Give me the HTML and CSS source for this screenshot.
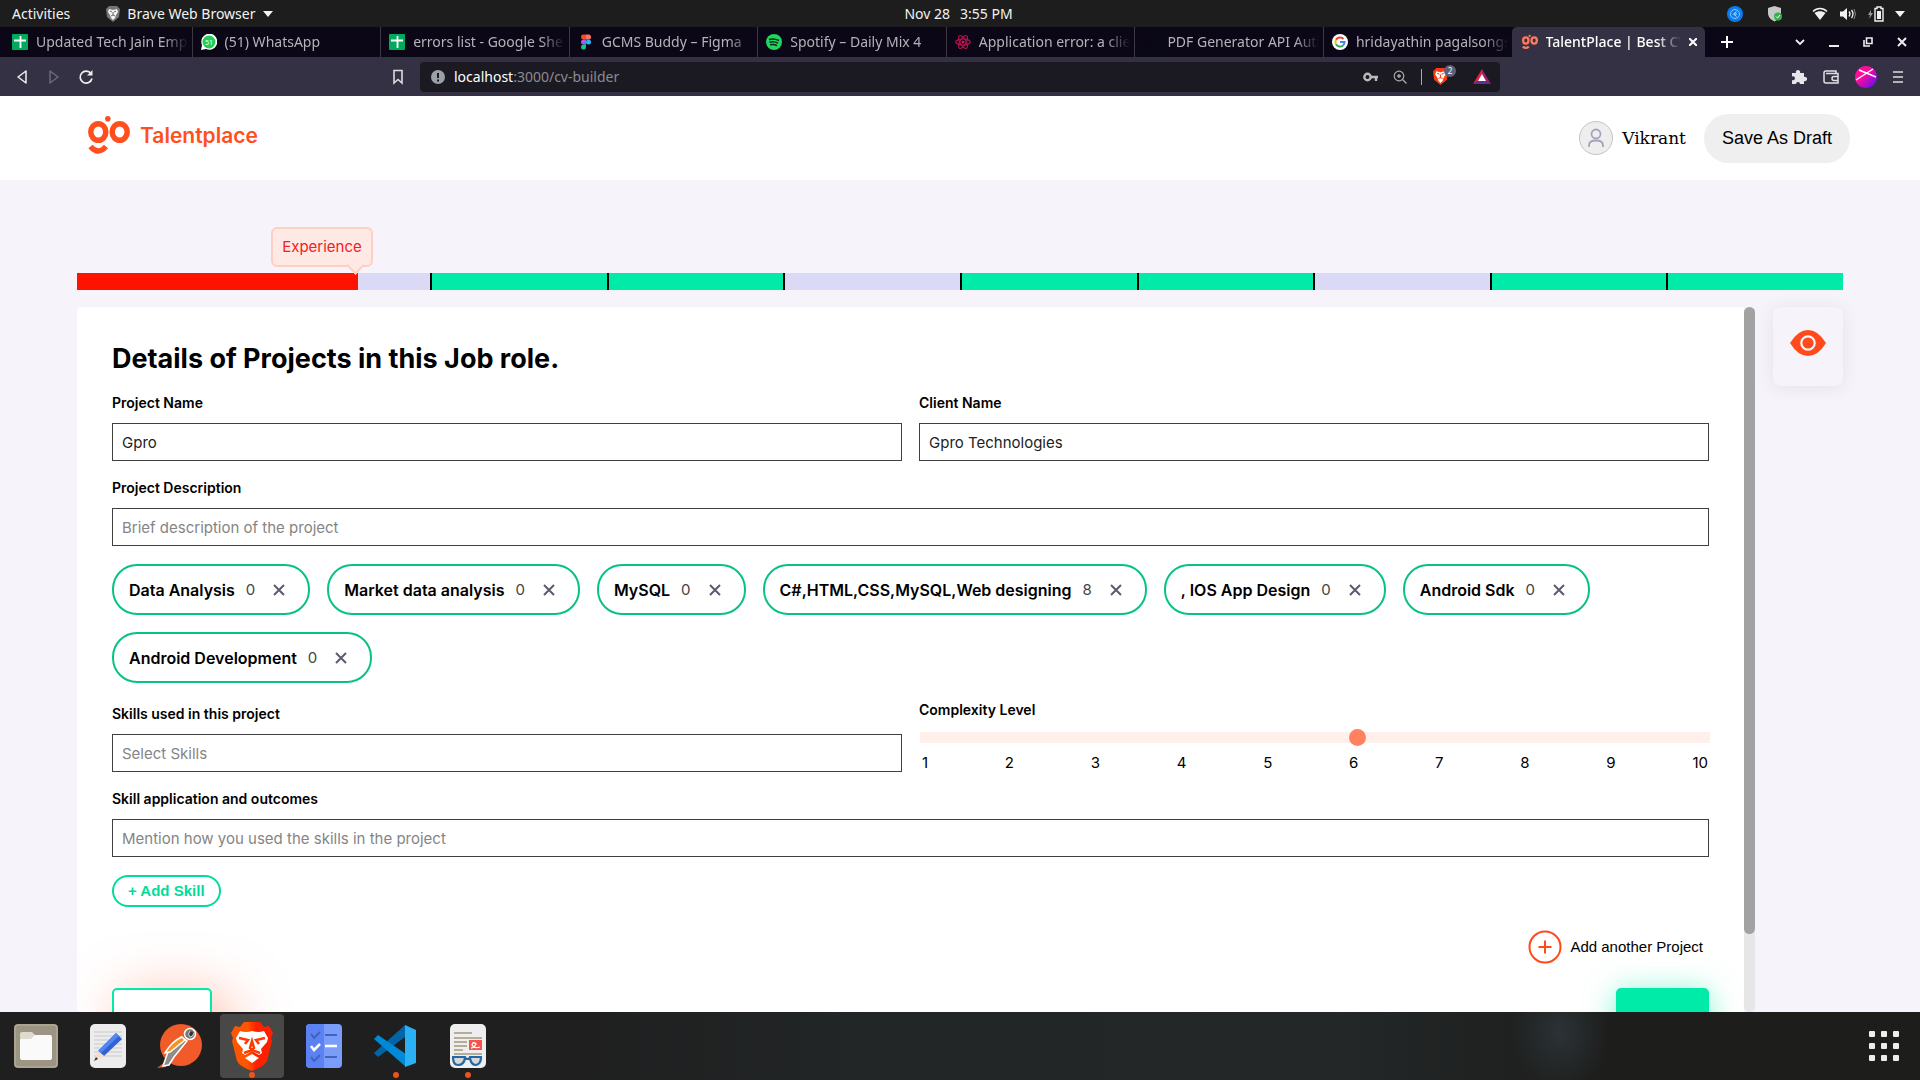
FILE: index.html
```html
<!DOCTYPE html>
<html lang="en">
<head>
<meta charset="utf-8">
<title>TalentPlace | Best</title>
<link rel="stylesheet" href="styles.css">
</head>
<body>
<div class="topbar">
  <div class="topbar-left">
    <span>Activities</span>
    <span class="app-menu">
      <svg width="14" height="16" viewBox="0 0 14 16"><path d="M3 0h8l3 3-1 8-6 5-6-5-1-8z" fill="#77777a"/><path d="M3 3l4 1 4-1 1 3-2 3-1 3-2 2-2-2-1-3-2-3z" fill="#f4f4f4"/><path d="M4 5l2 1M10 5L8 6M7 6v3M5 10l2-1 2 1" stroke="#66666a" fill="none"/></svg>
      Brave Web Browser
      <svg width="10" height="6" viewBox="0 0 10 6"><path d="M0 0h10L5 6z" fill="#f2f2f2"/></svg>
    </span>
  </div>
  <div class="clock"><span>Nov 28</span><span>3:55 PM</span></div>
  <div class="tray">
    <svg class="tray-blue" width="16" height="16" viewBox="0 0 16 16"><circle cx="8" cy="8" r="8" fill="#0a7cf0"/><circle cx="8" cy="8" r="4.500" fill="none" stroke="#8cc6ff"/><path d="M9.500 5.500L6.500 8l3 2.500M10 8H7" fill="none" stroke="#b9dcff"/></svg>
    <svg class="tray-shield" width="14" height="16" viewBox="0 0 14 16"><path d="M6.500 0L13 2v5c0 4-3 7-6.500 8.500C3 14 0 11 0 7V2z" fill="#c8c8c8"/><circle cx="10" cy="10.500" r="4" fill="#35b34a"/><path d="M8 10.500l1.500 1.500 2.500-3" fill="none" stroke="#fff"/></svg>
    <svg class="tray-wifi" width="16" height="14" viewBox="0 0 16 14"><path d="M1 4.500C5 .500 11 .500 15 4.500" fill="none" stroke="#f2f2f2" stroke-width="1.500"/><path d="M2.500 6C5.500 3.500 10.500 3.500 13.500 6L8 13z" fill="#f2f2f2"/></svg>
    <svg class="tray-sound" width="16" height="14" viewBox="0 0 16 14"><path d="M0 4.500h3L7 1v12L3 9.500H0z" fill="#f2f2f2"/><path d="M9 4.500q2 2.500 0 5M11.500 3q3 4 0 8" fill="none" stroke="#f2f2f2" stroke-width="1.300"/><path d="M14 2q3 5 0 10" fill="none" stroke="#888"/></svg>
    <svg class="tray-battery" width="16" height="16" viewBox="0 0 16 16"><path d="M3 4L0 9h2l-1 4 4-6H3z" fill="#999"/><path d="M7 2.500h2V1h4v1.500h2V15H7z" fill="none" stroke="#f2f2f2" stroke-width="1.400"/><path d="M9 5h4v8H9z" fill="#f2f2f2"/></svg>
    <svg width="10" height="6" viewBox="0 0 10 6"><path d="M0 0h10L5 6z" fill="#f2f2f2"/></svg>
  </div>
</div>

<div class="tabstrip">
  <div class="tabs">
    <div class="tab"><svg class="fav" viewBox="0 0 16 16"><rect width="16" height="16" rx="1" fill="#00a95c"/><path d="M8.500 2v12M2 6.500h12" stroke="#fff" stroke-width="1.800"/></svg><span class="tab-title">Updated Tech Jain Employees</span></div>
    <div class="tab"><svg class="fav" viewBox="0 0 16 16"><path d="M0 16l1-5a8 8 0 1 1 4 4z" fill="#fff"/><circle cx="8" cy="8" r="6.500" fill="#1fce54"/><text x="8" y="11" font-family="Noto Sans" font-size="7" text-anchor="middle" fill="#fff">51</text></svg><span class="tab-title">(51) WhatsApp</span></div>
    <div class="tab"><svg class="fav" viewBox="0 0 16 16"><rect width="16" height="16" rx="1" fill="#00a95c"/><path d="M8.500 2v12M2 6.500h12" stroke="#fff" stroke-width="1.800"/></svg><span class="tab-title">errors list - Google Sheets</span></div>
    <div class="tab"><svg class="fav" viewBox="0 0 16 16"><path d="M8 .500H5.500a2.500 2.500 0 0 0 0 5H8z" fill="#f24e1e"/><path d="M8 .500h2.500a2.500 2.500 0 0 1 0 5H8z" fill="#ff7262"/><path d="M8 5.500H5.500a2.500 2.500 0 0 0 0 5H8z" fill="#a259ff"/><circle cx="10.500" cy="8" r="2.500" fill="#1abcfe"/><path d="M8 10.500H5.500A2.500 2.500 0 1 0 8 13z" fill="#0acf83"/></svg><span class="tab-title">GCMS Buddy – Figma</span></div>
    <div class="tab"><svg class="fav" viewBox="0 0 16 16"><circle cx="8" cy="8" r="8" fill="#1ed760"/><path d="M3 5.500q5-1.500 10 1M3.500 8.200q4.500-1.200 8.500 1M4 10.800q4-1 7 .800" fill="none" stroke="#0c2a18" stroke-width="1.500"/></svg><span class="tab-title">Spotify – Daily Mix 4</span></div>
    <div class="tab"><svg class="fav" viewBox="0 0 16 16"><g fill="none" stroke="#b5124c" stroke-width="1.200"><ellipse cx="8" cy="8" rx="7.300" ry="3"/><ellipse cx="8" cy="8" rx="7.300" ry="3" transform="rotate(60 8 8)"/><ellipse cx="8" cy="8" rx="7.300" ry="3" transform="rotate(120 8 8)"/></g><circle cx="8" cy="8" r="1.500" fill="#d3175a"/></svg><span class="tab-title">Application error: a client-side</span></div>
    <div class="tab"><svg class="fav" viewBox="0 0 16 16"><path d="M2.500 1h8L14 4.500V15H2.500zM7 12V7h3v3H7" fill="none" stroke="#050a12" stroke-width="1.500"/></svg><span class="tab-title">PDF Generator API Authentication</span></div>
    <div class="tab"><svg class="fav" viewBox="0 0 16 16"><circle cx="8" cy="8" r="8" fill="#fff"/><g fill="none" stroke-width="2"><path d="M11.500 5A4.600 4.600 0 0 0 4 5.800" stroke="#ea4335"/><path d="M4 5.800a4.600 4.600 0 0 0 0 4.400" stroke="#fbbc05"/><path d="M4 10.200a4.600 4.600 0 0 0 7 1.300" stroke="#34a853"/><path d="M8 8h4.600a4.600 4.600 0 0 1-1.600 3.500" stroke="#4285f4"/></g></svg><span class="tab-title">hridayathin pagalsongs</span></div>
    <div class="tab tab-active"><svg class="fav" viewBox="0 0 42 38"><g fill="none" stroke="#ff7a5c" stroke-width="6"><ellipse cx="10" cy="15" rx="7" ry="8"/><ellipse cx="32" cy="15" rx="7" ry="8"/><path d="M2 31q8 7 16 0"/></g><circle cx="20" cy="3" r="3" fill="#ff7a5c"/></svg><span class="tab-title">TalentPlace | Best CV</span>
      <svg width="8" height="8" viewBox="0 0 8 8"><path d="M0 0l8 8M8 0L0 8" stroke="#fff" stroke-width="2"/></svg></div>
  </div>
  <svg class="new-tab" width="12" height="12" viewBox="0 0 12 12"><path d="M6 0v12M0 6h12" stroke="#fff" stroke-width="2"/></svg>
  <div class="window-controls">
    <svg width="10" height="10" viewBox="0 0 10 10"><path d="M1 3l4 4 4-4" fill="none" stroke="#eee" stroke-width="1.800"/></svg>
    <svg width="10" height="10" viewBox="0 0 10 10"><path d="M0 9h10" stroke="#eee" stroke-width="2"/></svg>
    <svg width="10" height="10" viewBox="0 0 10 10"><path d="M3.500 1h5.500v5.500H3.500zM1 3v6h6" fill="none" stroke="#eee" stroke-width="1.600"/></svg>
    <svg width="10" height="10" viewBox="0 0 10 10"><path d="M1 1l8 8M9 1L1 9" stroke="#eee" stroke-width="2"/></svg>
  </div>
</div>

<div class="toolbar">
  <div class="nav">
    <svg width="16" height="16" viewBox="0 0 16 16"><path d="M12 2v12L4 8z" fill="none" stroke="#eee" stroke-width="1.500" stroke-linejoin="round"/></svg>
    <svg width="16" height="16" viewBox="0 0 16 16"><path d="M4 2v12l8-6z" fill="none" stroke="#6c6978" stroke-width="1.500" stroke-linejoin="round"/></svg>
    <svg width="16" height="16" viewBox="0 0 16 16"><path d="M13 4.500A6 6 0 1 0 14 9.500" fill="none" stroke="#eee" stroke-width="1.700"/><path d="M14.500 1v5.500H9z" fill="#eee"/></svg>
    <svg class="bookmark" width="12" height="16" viewBox="0 0 12 16"><path d="M2 1.500h8v12.500L6 10.500 2 14z" fill="none" stroke="#ddd" stroke-width="1.600"/></svg>
  </div>
  <div class="address">
    <svg width="14" height="14" viewBox="0 0 14 14"><circle cx="7" cy="7" r="7" fill="#9aa0a6"/><path d="M7 3v5M7 9.500v2" stroke="#1b1a23" stroke-width="2"/></svg>
    <span class="url">localhost<span class="url-path">:3000/cv-builder</span></span>
    <svg width="16" height="10" viewBox="0 0 16 10"><circle cx="4.500" cy="5" r="3.200" fill="none" stroke="#bbb" stroke-width="2.400"/><path d="M8 5h7M13 5v4" stroke="#bbb" stroke-width="2.400"/></svg>
    <svg width="14" height="14" viewBox="0 0 14 14"><circle cx="6" cy="6" r="4.800" fill="none" stroke="#aaa" stroke-width="1.200"/><path d="M9.500 9.500l4 4M6 4v4M4 6h4" stroke="#aaa" stroke-width="1.300"/></svg>
    <span class="address-rule"></span>
    <span class="shield">
      <svg width="15" height="17" viewBox="0 0 14 16"><path d="M3 0h8l3 3-1 8-6 5-6-5-1-8z" fill="#fb3a10"/><path d="M3 3l4 1 4-1 1 3-2 3-1 3-2 2-2-2-1-3-2-3z" fill="#fff"/><path d="M4 5l2 1M10 5L8 6M7 6v3M5 10l2-1 2 1" stroke="#fb3a10" fill="none"/></svg>
      <span class="shield-count">2</span>
    </span>
    <svg width="18" height="15" viewBox="0 0 18 15"><path d="M9 0L0 15l9-5z" fill="#e2223f"/><path d="M9 0l9 15-9-5z" fill="#9e1f63"/><path d="M0 15h18L9 9z" fill="#662d91"/><path d="M9 5l4 7H5z" fill="#fff"/></svg>
  </div>
  <div class="extensions">
    <svg width="16" height="16" viewBox="0 0 16 16"><path d="M1 4h4a2.200 2.200 0 1 1 4 0h4v4a2.200 2.200 0 1 1 0 4v3H9a2 2 0 1 0-4 0H1v-4a2 2 0 1 0 0-3.500z" fill="#e6e6ea"/></svg>
    <svg width="16" height="14" viewBox="0 0 16 14"><path d="M13 3.500V1H3a2 2 0 0 0-2 2v8a2 2 0 0 0 2 2h12V3.500H3M15 6.500h-4a2 2 0 0 0 0 4h4" fill="none" stroke="#e0e0e4" stroke-width="1.500"/></svg>
    <svg width="22" height="22" viewBox="0 0 22 22"><defs><linearGradient id="av" x1="0" y1="0" x2="1" y2="1"><stop offset=".4" stop-color="#ff0a9c"/><stop offset="1" stop-color="#4a10ff"/></linearGradient></defs><circle cx="11" cy="11" r="11" fill="url(#av)"/><path d="M1 14L18 3M4 4l17 7" stroke="#fff" stroke-width="1.400"/></svg>
    <svg width="10" height="12" viewBox="0 0 10 12"><path d="M0 1h10M0 6h10M0 11h10" stroke="#ddd" stroke-width="1.600"/></svg>
  </div>
</div>

<header class="header">
  <a class="brand" href="#">
    <svg width="42" height="38" viewBox="0 0 42 38"><g fill="none" stroke="#ff4f1f" stroke-width="5.500"><ellipse cx="10.300" cy="16" rx="7.500" ry="8.300"/><ellipse cx="31.700" cy="16" rx="7.500" ry="8.300"/><path d="M2.500 30.500q7.500 9 15.500 0"/></g><circle cx="19.800" cy="2.800" r="2.800" fill="#ff4f1f"/></svg>
    <span>Talentplace</span>
  </a>
  <div class="account">
    <span class="avatar"><svg width="18" height="20" viewBox="0 0 18 20"><g fill="none" stroke="#a5a3bb" stroke-width="1.800"><circle cx="9" cy="6" r="4.500"/><path d="M2 19v-1.500q0-5 7-5t7 5V19"/></g></svg></span>
    <span class="user-name">Vikrant</span>
    <button class="save-draft" type="button">Save As Draft</button>
  </div>
</header>

<main class="main">
  <div class="progress">
    <span class="seg"></span><span class="seg"></span><span class="seg done"></span><span class="seg done"></span><span class="seg"></span><span class="seg done"></span><span class="seg done"></span><span class="seg"></span><span class="seg done"></span><span class="seg done"></span>
    <div class="progress-fill" style="width: 15.9%"><span class="tip">Experience</span></div>
  </div>

  <div class="workspace">
    <form class="card">
      <h1 class="title">Details of Projects in this Job role.</h1>
      <div class="row">
        <div class="field"><label for="pname">Project Name</label><input class="text-input" id="pname" type="text" value="Gpro"></div>
        <div class="field"><label for="cname">Client Name</label><input class="text-input" id="cname" type="text" value="Gpro Technologies"></div>
      </div>
      <div class="field"><label for="pdesc">Project Description</label><input class="text-input" id="pdesc" type="text" placeholder="Brief description of the project"></div>
      <ul class="chips">
        <li class="chip"><b>Data Analysis</b><span>0</span><button class="remove" type="button" aria-label="Remove"><svg width="12" height="12" viewBox="0 0 12 12"><path d="M1 1l10 10M11 1L1 11"/></svg></button></li>
        <li class="chip"><b>Market data analysis</b><span>0</span><button class="remove" type="button" aria-label="Remove"><svg width="12" height="12" viewBox="0 0 12 12"><path d="M1 1l10 10M11 1L1 11"/></svg></button></li>
        <li class="chip"><b>MySQL</b><span>0</span><button class="remove" type="button" aria-label="Remove"><svg width="12" height="12" viewBox="0 0 12 12"><path d="M1 1l10 10M11 1L1 11"/></svg></button></li>
        <li class="chip"><b>C#,HTML,CSS,MySQL,Web designing</b><span>8</span><button class="remove" type="button" aria-label="Remove"><svg width="12" height="12" viewBox="0 0 12 12"><path d="M1 1l10 10M11 1L1 11"/></svg></button></li>
        <li class="chip"><b>, IOS App Design</b><span>0</span><button class="remove" type="button" aria-label="Remove"><svg width="12" height="12" viewBox="0 0 12 12"><path d="M1 1l10 10M11 1L1 11"/></svg></button></li>
        <li class="chip"><b>Android Sdk</b><span>0</span><button class="remove" type="button" aria-label="Remove"><svg width="12" height="12" viewBox="0 0 12 12"><path d="M1 1l10 10M11 1L1 11"/></svg></button></li>
        <li class="chip"><b>Android Development</b><span>0</span><button class="remove" type="button" aria-label="Remove"><svg width="12" height="12" viewBox="0 0 12 12"><path d="M1 1l10 10M11 1L1 11"/></svg></button></li>
      </ul>
      <div class="row">
        <div class="field"><label for="skills">Skills used in this project</label><input class="text-input" id="skills" type="text" placeholder="Select Skills"></div>
        <div class="field">
          <label for="level">Complexity Level</label>
          <input class="slider" id="level" type="range" min="1" max="10" value="6">
          <div class="ticks"><span>1</span><span>2</span><span>3</span><span>4</span><span>5</span><span>6</span><span>7</span><span>8</span><span>9</span><span>10</span></div>
        </div>
      </div>
      <div class="field"><label for="outcome">Skill application and outcomes</label><input class="text-input" id="outcome" type="text" placeholder="Mention how you used the skills in the project"></div>
      <button class="add-skill" type="button">+ Add Skill</button>
      <button class="add-project" type="button">
        <svg width="34" height="34" viewBox="0 0 34 34"><circle cx="17" cy="17" r="15.500" fill="none" stroke="#ff4a1c" stroke-width="2"/><path d="M17 10.500v13M10.500 17h13" stroke="#ff4a1c" stroke-width="2"/></svg>
        Add another Project
      </button>
      <div class="actions">
        <button class="step prev" type="button" aria-label="Previous"></button>
        <button class="step next" type="button" aria-label="Next"></button>
      </div>
    </form>
    <div class="scrollbar"><div class="thumb"></div></div>
    <button class="preview" type="button" aria-label="Preview">
      <svg width="36" height="26" viewBox="0 0 36 26"><path d="M0 13Q8 0 18 0t18 13Q28 26 18 26T0 13z" fill="#ff4a1c"/><circle cx="18" cy="13" r="6.700" fill="none" stroke="#f6f4fa" stroke-width="2.200"/></svg>
    </button>
  </div>
</main>

<footer class="dock">
  <div class="dock-apps">
    <div class="app"><svg width="44" height="44" viewBox="0 0 44 44"><rect width="44" height="44" rx="4" fill="#9d9583"/><rect x="1" y="1" width="42" height="42" rx="3" fill="none" stroke="#b8b1a0"/><path d="M6 10q0-2 2-2h10l3 3v5H6z" fill="#dedad0"/><path d="M6 16q0-1 2-1h9l4-4h15q2 0 2 2v21q0 2-2 2H8q-2 0-2-2z" fill="#fafafa"/></svg></div>
    <div class="app"><svg width="38" height="46" viewBox="0 0 38 46"><rect x="1" y="1" width="36" height="44" rx="5" fill="#ececec"/><path d="M5 9h28M5 13h28M5 17h28M5 21h28M5 25h28M5 29h28M5 33h28" stroke="#c9c9c9"/><path d="M27 10l6 6-18 17-6-5z" fill="#2f62d9"/><path d="M27 10l3 3-18 17-3-2z" fill="#5485ee"/><path d="M9 28l6 5-10 5z" fill="#fbdcc4"/><path d="M7 34l2 2-4 2z" fill="#333"/></svg></div>
    <div class="app"><svg width="46" height="46" viewBox="0 0 46 46"><circle cx="24" cy="22" r="21" fill="#f15a29"/><path d="M0 45l8-6 1 5z" fill="#f15a29"/><g stroke="#fff" stroke-width="1.500"><path d="M24 14l6 4-13 16-5 8-6 1 5-14z" fill="#8d8d8d"/><path d="M25 14l3 3-15 12-5 1q7-12 17-16z" fill="#f7941e"/><circle cx="33" cy="11" r="5.500" fill="#777"/></g><path d="M33 8q-3 3 0 6 3 0 4-4" fill="#333" stroke="#ddd"/></svg></div>
    <div class="app current running"><svg width="42" height="50" viewBox="0 0 42 50"><defs><linearGradient id="br"><stop offset=".4" stop-color="#ff5500"/><stop offset=".6" stop-color="#ff2000"/></linearGradient></defs><path d="M13 1h16l4 5 5-1 4 7-2 5 1 3-5 20q-2 5-15 10Q8 45 6 40L1 20l1-3-2-5 4-7 5 1z" fill="url(#br)"/><path d="M9 10q6 2 12 0 6 2 12 0l4 7-1 4-6 7 1 4-3 2-7-4-7 4-3-2 1-4-6-7-1-4z" fill="#fff"/><path d="M21 33l7 4-7 5-7-5z" fill="#fff"/><path d="M8 17l9 2-3 4M34 17l-9 2 3 4M21 20l-2 7 2 2 2-2zM13 32l8-3 8 3" fill="none" stroke="#ff3a00" stroke-width="2.500"/></svg></div>
    <div class="app"><svg width="38" height="46" viewBox="0 0 38 46"><rect x="1" y="1" width="36" height="44" rx="4" fill="#7a9dfa"/><path d="M5 1h14v44H5q-4 0-4-4V5q0-4 4-4z" fill="#5b82f3"/><path d="M6 11l3 4 6-6M6 34l3 4 6-6M20 12h12M20 34h12" fill="none" stroke="#4162bd" stroke-width="2"/><path d="M6 23l3 4 6-6M20 23h12" fill="none" stroke="#fff" stroke-width="2.500"/></svg></div>
    <div class="app running"><svg width="44" height="44" viewBox="0 0 44 44"><path d="M31 1v42L4 17l-3-3 3-3 4 1z" fill="none"/><path d="M0 29l4 4 27-20V1z" fill="#0065a9"/><path d="M4 11l-4 4 32 28V30z" fill="#0089d6"/><path d="M31 1l11 5v33l-11 4z" fill="#2cb0f4"/><path d="M31 1v12L19 22l12 9v12" fill="none"/></svg></div>
    <div class="app running"><svg width="38" height="46" viewBox="0 0 38 46"><rect x="1" y="1" width="36" height="44" rx="5" fill="#eee"/><path d="M5 10h18M5 15h28M5 19h13M5 23h13M5 27h9M5 31h28" stroke="#b5ad98" stroke-width="2"/><rect x="20" y="17" width="13" height="10" fill="#f4544c"/><path d="M22 25q3 0 5-4-3-3-4 1 2 4 8 2" fill="none" stroke="#fff" stroke-width="1.300"/><path d="M3 34h13l1 2h3l1-2h12M4 34q0 8 5 8 6 0 7-7M21 35q1 7 6 7 5-1 5-8" fill="#9c9c9c44" stroke="#2468a8" stroke-width="2.200"/></svg></div>
  </div>
  <svg width="30" height="30" viewBox="0 0 30 30"><g fill="#eeeeec"><rect width="6" height="6" rx="1"/><rect x="12" width="6" height="6" rx="1"/><rect x="24" width="6" height="6" rx="1"/><rect y="12" width="6" height="6" rx="1"/><rect x="12" y="12" width="6" height="6" rx="1"/><rect x="24" y="12" width="6" height="6" rx="1"/><rect y="24" width="6" height="6" rx="1"/><rect x="12" y="24" width="6" height="6" rx="1"/><rect x="24" y="24" width="6" height="6" rx="1"/></g></svg>
</footer>
</body>
</html>
```
FILE: styles.css
```css
* { box-sizing: border-box; }

body {
  margin: 0;
  height: 100vh;
  display: flex;
  flex-direction: column;
  overflow: hidden;
  background: #f6f4fa;
  font-family: Inter, sans-serif;
  color: #000;
}

svg { display: block; flex: none; }

button { font-family: inherit; cursor: pointer; }

/* Desktop top bar */
.topbar {
  display: grid;
  grid-template-columns: 1fr auto 1fr;
  align-items: center;
  height: 27px;
  flex: none;
  padding: 0 15px 0 12px;
  background: #1d1d1d;
  color: #f2f2f2;
  font: 14px/20px "Noto Sans", sans-serif;
}
.topbar-left { display: flex; gap: 36px; }
.app-menu { display: flex; align-items: center; gap: 7px; }
.clock { display: flex; gap: 10px; }
.tray { display: flex; align-items: center; justify-content: flex-end; }
.tray-blue { margin-right: 25px; }
.tray-shield { margin-right: 30px; }
.tray-wifi { margin-right: 12px; }
.tray-sound { margin-right: 12px; }
.tray-battery { margin-right: 11px; }

/* Browser tabs */
.tabstrip {
  display: flex;
  align-items: center;
  height: 30px;
  flex: none;
  padding: 0 13px 0 4px;
  background: #0c0716;
  color: #b4b2ba;
  font: 14px/20px "Noto Sans", sans-serif;
}
.tabs { display: flex; flex: 0 1 1701px; min-width: 0; height: 100%; }
.tab {
  display: flex;
  align-items: center;
  flex: 1 1 0;
  min-width: 0;
  gap: 8px;
  padding: 0 4px 0 8px;
  border-right: 1px solid #3b3843;
}
.fav { width: 16px; height: 16px; }
.tab-title {
  flex: 1;
  min-width: 0;
  overflow: hidden;
  white-space: nowrap;
  mask-image: linear-gradient(to right, #000 calc(100% - 24px), transparent);
}
.tab:nth-child(8) { border-right: 0; }
.tab-active {
  padding: 0 8px 0 10px;
  border: 0;
  border-radius: 5px 5px 0 0;
  background: #343144;
  color: #fff;
  font-weight: 500;
}
.new-tab { margin-left: 16px; }
.window-controls { display: flex; gap: 24px; margin-left: auto; }

/* Browser toolbar */
.toolbar {
  display: grid;
  grid-template-columns: 1fr minmax(0, 1080px) 1fr;
  align-items: center;
  height: 39px;
  flex: none;
  background: #343144;
  font: 14px/20px "Noto Sans", sans-serif;
}
.nav { display: flex; align-items: center; gap: 16px; padding: 0 16px 0 14px; }
.bookmark { margin-left: auto; }
.address {
  display: flex;
  align-items: center;
  gap: 14px;
  height: 30px;
  padding: 0 9px 0 11px;
  border-radius: 4px;
  background: #1b1a23;
}
.url { flex: 1; margin-left: -5px; color: #fff; }
.url-path { color: #8b8a92; }
.address-rule { width: 1px; height: 16px; background: #aaa; }
.shield { position: relative; margin: 0 11px 0 -3px; }
.shield-count {
  position: absolute;
  left: 11px;
  top: -3px;
  width: 12px;
  height: 12px;
  border-radius: 6px;
  background: #5e6074;
  color: #fff;
  font-size: 8px;
  line-height: 12px;
  text-align: center;
}
.extensions { display: flex; align-items: center; justify-content: flex-end; gap: 16px; padding-right: 17px; }

/* Site header */
.header {
  display: flex;
  align-items: center;
  justify-content: space-between;
  height: 84px;
  flex: none;
  padding: 0 70px 0 88px;
  background: #fff;
}
.brand {
  display: flex;
  align-items: center;
  gap: 10px;
  padding-bottom: 6px;
  color: #ff4f1f;
  font-size: 21px;
  font-weight: 600;
  text-decoration: none;
}
.account { display: flex; align-items: center; }
.avatar {
  display: grid;
  place-items: center;
  width: 34px;
  height: 34px;
  border: 1px solid #c4c4c4;
  border-radius: 50%;
  background: #eee;
}
.user-name { margin: 0 18px 0 9px; font: 17px/24px "DejaVu Serif", serif; }
.save-draft {
  height: 49px;
  padding: 0 18px;
  border: 0;
  border-radius: 25px;
  background: #efefef;
  font: 18px/24px "Liberation Sans", sans-serif;
}

/* Builder */
.main {
  display: flex;
  flex-direction: column;
  flex: 1;
  min-height: 0;
  padding: 93px 77px 0;
}
.progress {
  position: relative;
  display: flex;
  height: 17px;
  flex: none;
  margin-bottom: 17px;
}
.seg { flex: 1; border-left: 2px solid #000; background: #dadaf6; }
.done { background: #00eba7; }
.progress-fill {
  position: absolute;
  inset: 0 auto 0 0;
  background: #ff1200;
}
.tip {
  position: absolute;
  right: -15px;
  bottom: 23px;
  padding: 9px;
  border: 2px solid #ffcfc4;
  border-radius: 6px;
  background: #ffe9e4;
  color: #f5201d;
  font-size: 15px;
  line-height: 18px;
}
.tip::after {
  content: "";
  position: absolute;
  right: 9px;
  bottom: -7px;
  width: 11px;
  height: 11px;
  border: solid #ffcfc4;
  border-width: 0 2px 2px 0;
  background: #ffe9e4;
  transform: rotate(45deg);
}
.workspace { display: flex; flex: 1; min-height: 0; align-items: stretch; }
.card {
  flex: 1;
  min-width: 0;
  overflow: hidden;
  padding: 35px 35px 0;
  border-radius: 5px 0 0 5px;
  background: #fff;
  display: flex;
  flex-direction: column;
  gap: 18px;
}
.card > * { flex: none; }
.title { margin: 0; font-size: 27px; line-height: 34px; font-weight: 700; }
.row { display: grid; grid-template-columns: 1fr 1fr; gap: 17px; align-items: end; }
.field { display: flex; flex-direction: column; }
.field label { margin-bottom: 11px; font-size: 14px; line-height: 18px; font-weight: 600; }
.text-input {
  width: 100%;
  height: 38px;
  padding: 0 9px;
  border: 1px solid #404040;
  border-radius: 0;
  background: #fff;
  color: #222;
  font: 15px/20px Inter, sans-serif;
}
.text-input::placeholder { color: #858585; }
.chips { display: flex; flex-wrap: wrap; gap: 17px; margin: 0; padding: 0; list-style: none; }
.chip {
  display: flex;
  align-items: center;
  height: 51px;
  padding: 0 23px 0 15px;
  border: 2px solid #08c285;
  border-radius: 25px;
  font-size: 15px;
}
.chip b { font-size: 16px; font-weight: 600; }
.chip span { margin: 0 18px 0 11px; color: #444; }
.remove { padding: 0; border: 0; background: none; }
.remove path { stroke: #5d5a70; stroke-width: 2; }
.slider {
  appearance: none;
  width: 100%;
  height: 11px;
  margin: 2px 1px 11px;
  background: #fff0ec;
}
.slider::-webkit-slider-thumb {
  appearance: none;
  width: 17px;
  height: 17px;
  border-radius: 50%;
  background: #ff8160;
}
.ticks { display: flex; justify-content: space-between; padding: 0 1px 0 3px; font-size: 15px; line-height: 18px; }
.add-skill {
  align-self: flex-start;
  height: 32px;
  padding: 0 14px;
  border: 2px solid #00dc9b;
  border-radius: 16px;
  background: #fff;
  color: #00dc9b;
  font: bold 15px/20px "Liberation Sans", sans-serif;
}
.add-project {
  display: flex;
  align-items: center;
  align-self: flex-end;
  gap: 8px;
  margin-top: 5px;
  padding: 0 6px 0 0;
  border: 0;
  background: none;
  font: 15px/20px "Liberation Sans", sans-serif;
}
.actions { display: flex; justify-content: space-between; margin-top: 6px; }
.step { height: 52px; border-radius: 5px; }
.prev {
  width: 100px;
  border: 2px solid #00eba7;
  background: #fff;
  box-shadow: 14px 14px 60px #ff4f1f88;
}
.next {
  width: 93px;
  border: 0;
  background: #00eba7;
  box-shadow: 0 4px 30px #00eba788;
}
.scrollbar { width: 11px; border-radius: 6px; background: #e6e6e6; }
.thumb { height: 89%; border-radius: 6px; background: #a2a2a2; }
.preview {
  display: flex;
  justify-content: center;
  width: 70px;
  height: 79px;
  margin-left: 18px;
  padding: 23px 0 0;
  border: 0;
  border-radius: 8px;
  background: #f6f4fa;
  box-shadow: 0 2px 18px #00000014;
}

/* Desktop dock */
.dock {
  display: flex;
  align-items: center;
  justify-content: space-between;
  height: 68px;
  flex: none;
  padding-right: 21px;
  background:
    radial-gradient(ellipse 50px 60px at 1560px 20px, #2b3236, transparent),
    linear-gradient(to right, #1f1f1f 30%, #222627 45%, #232728 70%, #1d1d1b 84%);
}
.dock-apps { display: flex; }
.app { position: relative; display: grid; place-items: center; width: 64px; height: 64px; margin: 0 4px; border-radius: 4px; }
.current { background: #484846; }
.running::after {
  content: "";
  position: absolute;
  left: 29px;
  bottom: 0;
  width: 6px;
  height: 6px;
  border-radius: 50%;
  background: #e95420;
}
```
